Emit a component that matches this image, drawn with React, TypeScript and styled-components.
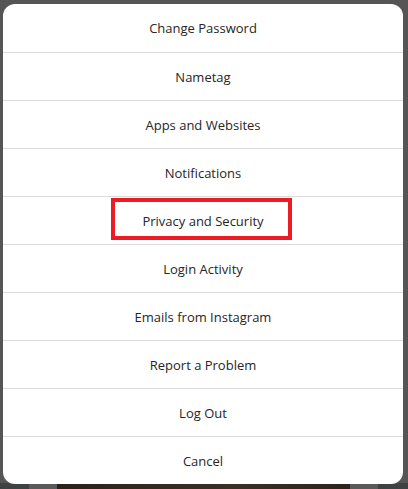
import React from 'react';
import styled, { createGlobalStyle } from 'styled-components';

const GlobalStyle = createGlobalStyle`
  html, body {
    margin: 0;
    padding: 0;
    background: #555555;
    height: 100%;
    overflow: hidden;
  }
  #root {
    height: 100%;
  }
`;

const Page = styled.div`
  position: relative;
  width: 408px;
  height: 489px;
  overflow: hidden;
  background: #555555;
`;

// what is left of the page behind the overlay
const Backdrop = styled.div`
  position: absolute;
  left: 0;
  right: 0;
  bottom: 0;
  height: 6px;
  display: grid;
  grid-template-columns: 29px 28px 1fr 28px 30px;
`;

const BackdropCell = styled.div<{ $bg: string }>`
  background: ${(p) => p.$bg};
`;

const Dialog = styled.div`
  position: relative;
  margin: 4px 0 0 3px;
  width: 400px;
  background: #ffffff;
  border-radius: 12px;
  overflow: hidden;
  font-family: 'Open Sans', 'Noto Sans', sans-serif;
`;

const Item = styled.button<{ $first?: boolean }>`
  position: relative;
  display: flex;
  align-items: center;
  justify-content: center;
  width: 100%;
  height: 48px;
  padding: 0;
  margin: 0;
  border: none;
  border-top: ${(p) => (p.$first ? 'none' : '1px solid #dbdbdb')};
  box-sizing: border-box;
  background: transparent;
  font-family: inherit;
  font-size: 13px;
  color: #262626;
  cursor: pointer;
`;

const Highlight = styled.span`
  position: absolute;
  left: 108px;
  top: 1px;
  width: 181px;
  height: 42px;
  box-sizing: border-box;
  border: 4px solid #ed1c24;
`;

const ITEMS = [
  'Change Password',
  'Nametag',
  'Apps and Websites',
  'Notifications',
  'Privacy and Security',
  'Login Activity',
  'Emails from Instagram',
  'Report a Problem',
  'Log Out',
  'Cancel',
];

export default function App() {
  return (
    <Page>
      <GlobalStyle />
      <Backdrop>
        <BackdropCell $bg="#3d4242" />
        <BackdropCell $bg="#5a5a5a" />
        <BackdropCell $bg="linear-gradient(90deg, #2a2119, #3a3125 60%, #2c241b)" />
        <BackdropCell $bg="#5a5a5a" />
        <BackdropCell $bg="#3d4242" />
      </Backdrop>
      <Dialog>
        {ITEMS.map((label, i) => (
          <Item key={label} $first={i === 0}>
            {label}
            {label === 'Privacy and Security' && <Highlight />}
          </Item>
        ))}
      </Dialog>
    </Page>
  );
}
